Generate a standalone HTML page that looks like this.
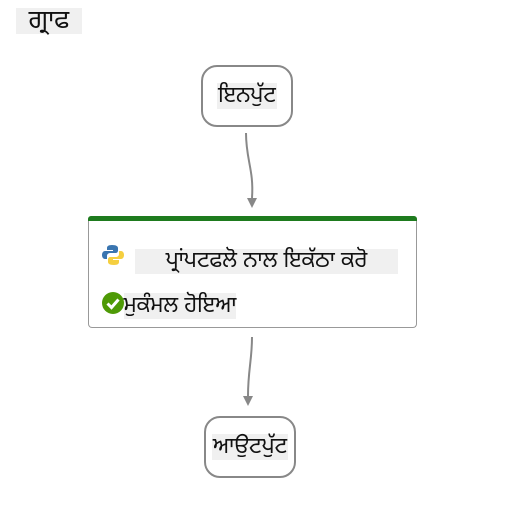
<!DOCTYPE html>
<html><head><style>
body{margin:0;width:507px;height:505px;background:#fff;position:relative;font-family:"Liberation Sans","Lohit Gurmukhi","Noto Sans Gurmukhi",sans-serif;color:#111;overflow:hidden}
.a{position:absolute}
.bg{background:#f0f0f0;display:flex;align-items:center;justify-content:center;font-size:22px;white-space:nowrap;overflow:visible}
.node{border:2px solid #888;border-radius:16px;background:#fff;display:flex;align-items:center;justify-content:center}
</style></head><body>
<div class="a bg" style="left:16px;top:8px;width:66px;height:26px;font-size:26px">ਗ੍ਰਾਫ</div>
<div class="a node" style="left:201px;top:65px;width:88px;height:58px"><span class="bg" style="padding:0 1px;height:26px">ਇਨਪੁੱਟ</span></div>
<svg class="a" style="left:0;top:0" width="507" height="505">
<path d="M246 133 C246 160 254 170 252 198" stroke="#888" stroke-width="2" fill="none"/>
<polygon points="247,198 257,198 252,208" fill="#888"/>
<path d="M252 337 C252 360 248 370 248 396" stroke="#888" stroke-width="2" fill="none"/>
<polygon points="243,396 253,396 248,406" fill="#888"/>
</svg>
<div class="a" style="left:88px;top:216px;width:327px;height:111px;border:1px solid #999;border-top:none;border-radius:4px;background:#fff"></div>
<div class="a" style="left:88px;top:216px;width:329px;height:5px;background:#1e7b1e;border-radius:3px 3px 0 0"></div>
<svg class="a" style="left:102px;top:244px" width="22" height="22" viewBox="0 0 22 22">
<path d="M10 1C6 1 5 2.5 5 4v2h6v1H3C1 7 0 9 0 11s1 4 3 4h2v-3c0-2 1.5-3 3.5-3h5c1.5 0 2.5-1 2.5-2.5V4c0-1.5-1.5-3-6-3z" fill="#3a75b0"/>
<path d="M12 21c4 0 5-1.5 5-3v-2h-6v-1h8c2 0 3-2 3-4s-1-4-3-4h-2v3c0 2-1.5 3-3.5 3h-5C7 13 6 14 6 15.5V18c0 1.5 1.5 3 6 3z" fill="#f5cf40"/>
</svg>
<div class="a bg" style="left:135px;top:249px;width:263px;height:25px">ਪ੍ਰਾਂਪਟਫਲੋ ਨਾਲ ਇਕੱਠਾ ਕਰੋ</div>
<svg class="a" style="left:101px;top:291px" width="24" height="24"><circle cx="12" cy="12" r="11" fill="#4e9a06"/><path d="M6.5 12.5l4 4 7-8" stroke="#fff" stroke-width="3" fill="none"/></svg>
<div class="a bg" style="left:124px;top:293px;width:112px;height:26px">ਮੁਕੰਮਲ ਹੋਇਆ</div>
<div class="a node" style="left:204px;top:416px;width:88px;height:58px"><span class="bg" style="padding:0 1px;height:26px">ਆਉਟਪੁੱਟ</span></div>
</body></html>
